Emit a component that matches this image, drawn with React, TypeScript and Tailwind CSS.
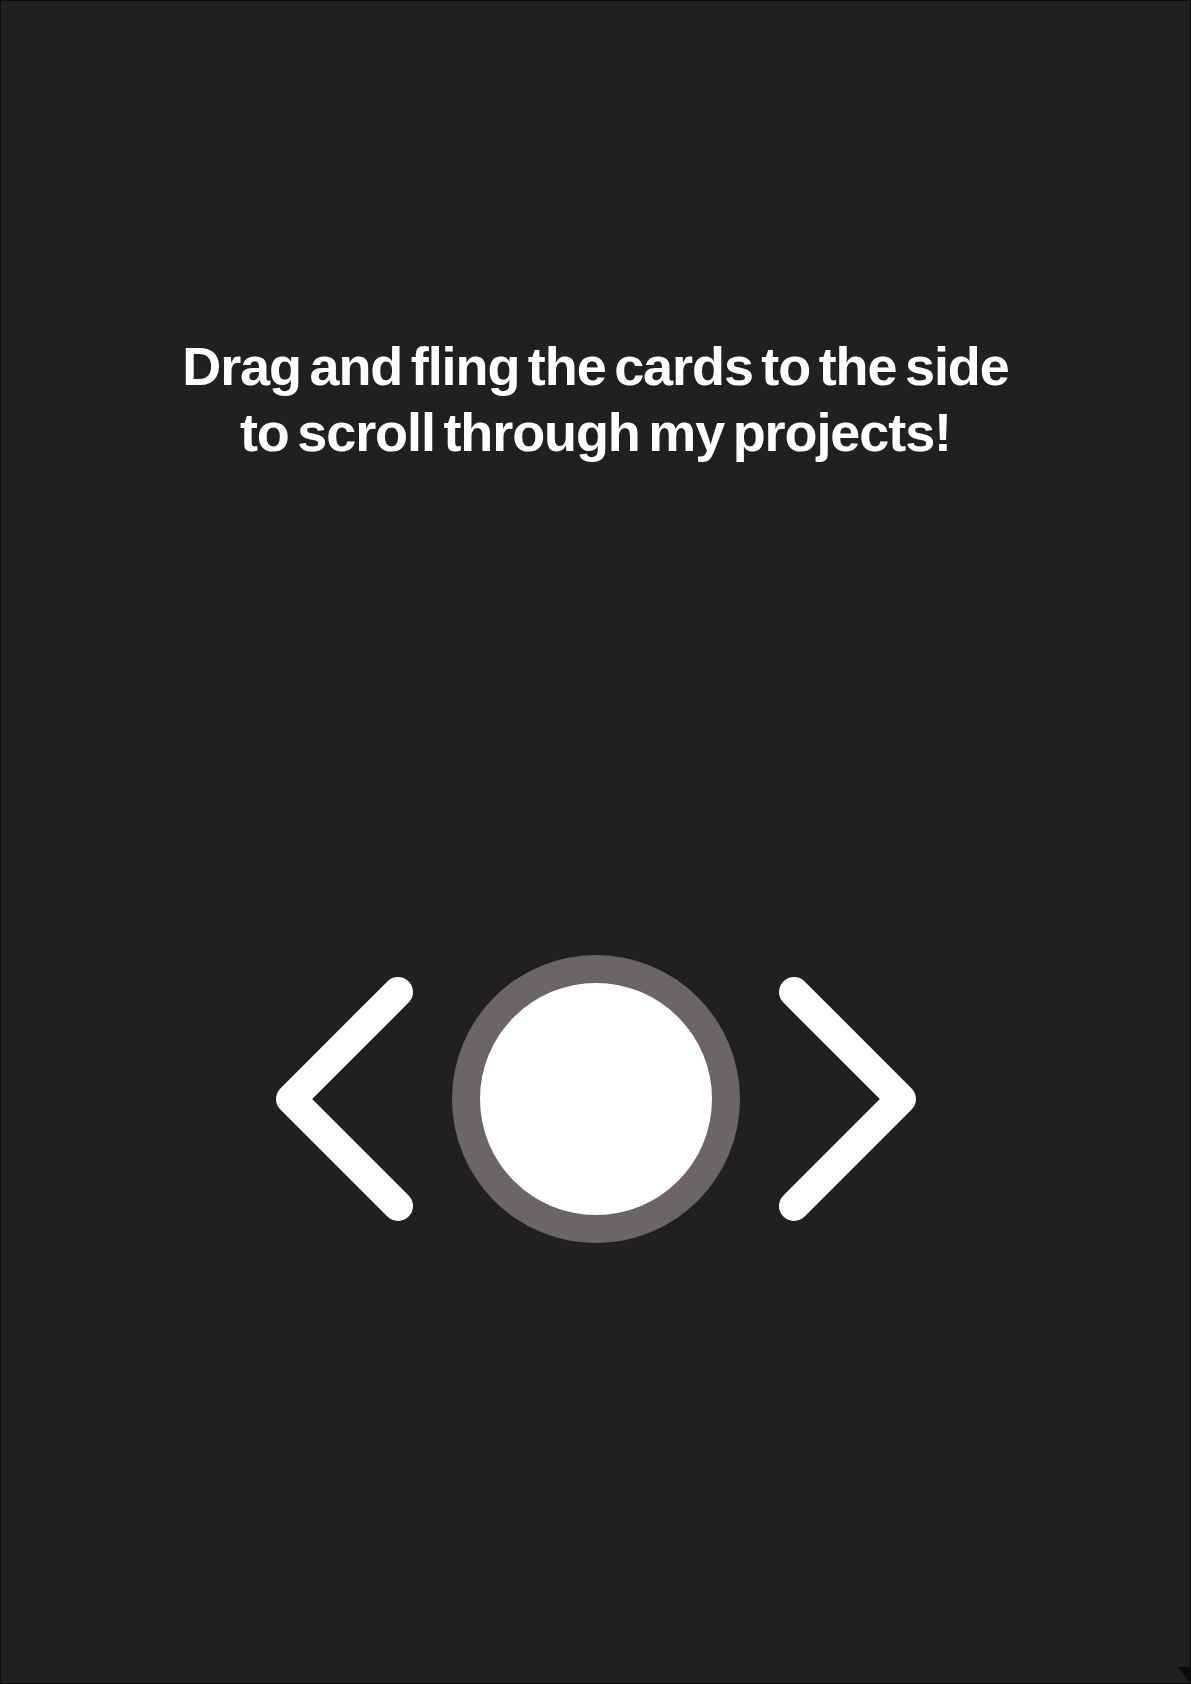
function Chevron({ side }: { side: "left" | "right" }) {
	const points = side === "left" ? "137,22 30,129 137,236" : "23,22 130,129 23,236";
	return (
		<svg width="160" height="258" viewBox="0 0 160 258" className="shrink-0">
			<polyline
				points={points}
				fill="none"
				stroke="#ffffff"
				strokeWidth="30"
				strokeLinecap="round"
				strokeLinejoin="round"
			/>
		</svg>
	);
}

export default function App() {
	return (
		<div className="relative h-[1684px] w-full overflow-hidden border border-[#0c0c0c] bg-[#1f2020] font-['Liberation_Sans',Arial,sans-serif] text-white">
			<div className="flex flex-col items-center pt-[332px]">
				<h1 className="text-center text-[54px] font-bold leading-[66px] tracking-[-0.02em] [word-spacing:-0.1em]">
					Drag and fling the cards to the side
					<br />
					to scroll through my projects!
				</h1>
				<div className="mt-[490px] flex items-center gap-[31px]">
					<Chevron side="left" />
					<div className="flex h-[288px] w-[288px] items-center justify-center rounded-full bg-[#6a6667]">
						<div className="h-[232px] w-[232px] rounded-full bg-white" />
					</div>
					<Chevron side="right" />
				</div>
			</div>
			<svg
				width="12"
				height="16"
				viewBox="0 0 12 16"
				className="absolute bottom-0 right-0"
			>
				<polygon points="0,0 12,0 12,16" fill="#0c0c0c" />
			</svg>
		</div>
	);
}
